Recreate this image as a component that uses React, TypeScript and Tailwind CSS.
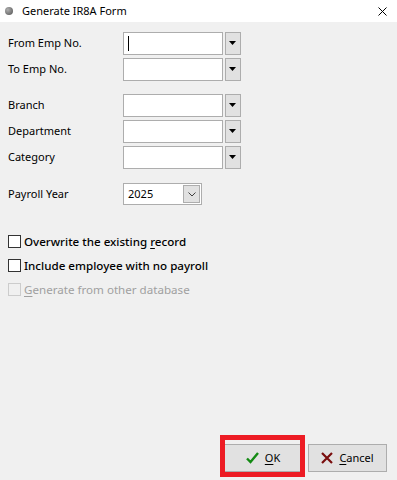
import React from 'react';

const font = { fontFamily: '"Noto Sans", "Segoe UI", sans-serif' };

const DropArrow = () => (
  <svg width="8" height="5" viewBox="0 0 8 5">
    <path d="M0 0 H7 L3.5 4 Z" fill="#000" />
  </svg>
);

const LookupField = ({ label, caret }: { label: string; caret?: boolean }) => (
  <div className="flex h-[23px] items-center">
    <span className="w-[115px] text-[11px] text-black">{label}</span>
    <div className="flex h-[23px] w-[100px] items-center border border-[#adadad] bg-white pl-[4px]">
      {caret && <div className="h-[15px] w-px bg-black" />}
    </div>
    <div className="ml-[2px] flex h-[23px] w-[16px] items-center justify-center border border-[#adadad] bg-[#e1e1e1]">
      <DropArrow />
    </div>
  </div>
);

const Check = ({ label, u, disabled }: { label: string; u?: number; disabled?: boolean }) => (
  <div className="flex h-[13px] items-center">
    <div
      className={
        disabled
          ? 'h-[13px] w-[13px] border border-[#cccccc] bg-[#f0f0f0]'
          : 'h-[13px] w-[13px] border border-[#333333] bg-white'
      }
    />
    <span
      className={
        disabled
          ? 'ml-[3px] text-[11.6px] text-[#a0a0a0]'
          : 'ml-[3px] text-[11.6px] font-medium text-black'
      }
    >
      {u === undefined ? (
        label
      ) : (
        <>
          {label.slice(0, u)}
          <span className="underline underline-offset-2">{label[u]}</span>
          {label.slice(u + 1)}
        </>
      )}
    </span>
  </div>
);

export default function App() {
  return (
    <div className="relative flex h-[480px] w-[397px] flex-col bg-[#f0f0f0]" style={font}>
      {/* Title bar */}
      <div className="flex h-[22px] items-center bg-white">
        <div className="ml-[5px] h-[8px] w-[8px] rounded-full bg-[radial-gradient(circle_at_35%_35%,#b0b0b0,#505050)]" />
        <span className="ml-[9px] text-[11px] text-black">Generate IR8A Form</span>
        <svg className="ml-auto mr-[10px]" width="9" height="9" viewBox="0 0 9 9">
          <path d="M0.5 0.5 L8.5 8.5 M8.5 0.5 L0.5 8.5" stroke="#000" strokeWidth="1" />
        </svg>
      </div>

      {/* Form */}
      <div className="flex flex-col pl-[8px]">
        <div className="mt-[10px] flex flex-col gap-[3px]">
          <LookupField label="From Emp No." caret />
          <LookupField label="To Emp No." />
        </div>
        <div className="mt-[13px] flex flex-col gap-[3px]">
          <LookupField label="Branch" />
          <LookupField label="Department" />
          <LookupField label="Category" />
        </div>

        <div className="mt-[14px] flex h-[22px] items-center">
          <span className="w-[115px] text-[11px] text-black">Payroll Year</span>
          <div className="flex h-[22px] w-[79px] items-center justify-between border border-[#adadad] bg-white pl-[4px] pr-px">
            <span className="text-[11px] text-black">2025</span>
            <div className="flex h-[18px] w-[17px] items-center justify-center border border-[#adadad] bg-[#e1e1e1]">
              <svg width="8" height="5" viewBox="0 0 8 5">
                <path d="M0.5 0.5 L4 4 L7.5 0.5" fill="none" stroke="#404040" strokeWidth="1" />
              </svg>
            </div>
          </div>
        </div>

        <div className="mt-[30px] flex flex-col gap-[11px]">
          <Check label="Overwrite the existing record" u={23} />
          <Check label="Include employee with no payroll" />
          <Check label="Generate from other database" u={0} disabled />
        </div>
      </div>

      {/* Buttons */}
      <div className="mt-auto mb-[8px] flex justify-end gap-[6px] pr-[10px]">
        <button className="flex h-[28px] w-[78px] items-center justify-center gap-[6px] border border-[#adadad] bg-[#e1e1e1] text-[11px] text-black">
          <svg width="13" height="12" viewBox="0 0 13 12">
            <path d="M1 6.5 L4.5 10 L12 1" fill="none" stroke="#138a13" strokeWidth="2.4" />
          </svg>
          <span>
            <span className="underline underline-offset-2">O</span>K
          </span>
        </button>
        <button className="flex h-[28px] w-[79px] items-center justify-center gap-[6px] border border-[#adadad] bg-[#e1e1e1] text-[11px] text-black">
          <svg width="12" height="12" viewBox="0 0 12 12">
            <path d="M1 1 L11 11 M11 1 L1 11" fill="none" stroke="#7a0e0e" strokeWidth="2.2" />
          </svg>
          <span>
            <span className="underline underline-offset-2">C</span>ancel
          </span>
        </button>
      </div>

      {/* Red highlight annotation */}
      <div className="absolute left-[220px] top-[435px] h-[42px] w-[85px] border-[5px] border-[#ed1c24]" />
    </div>
  );
}
